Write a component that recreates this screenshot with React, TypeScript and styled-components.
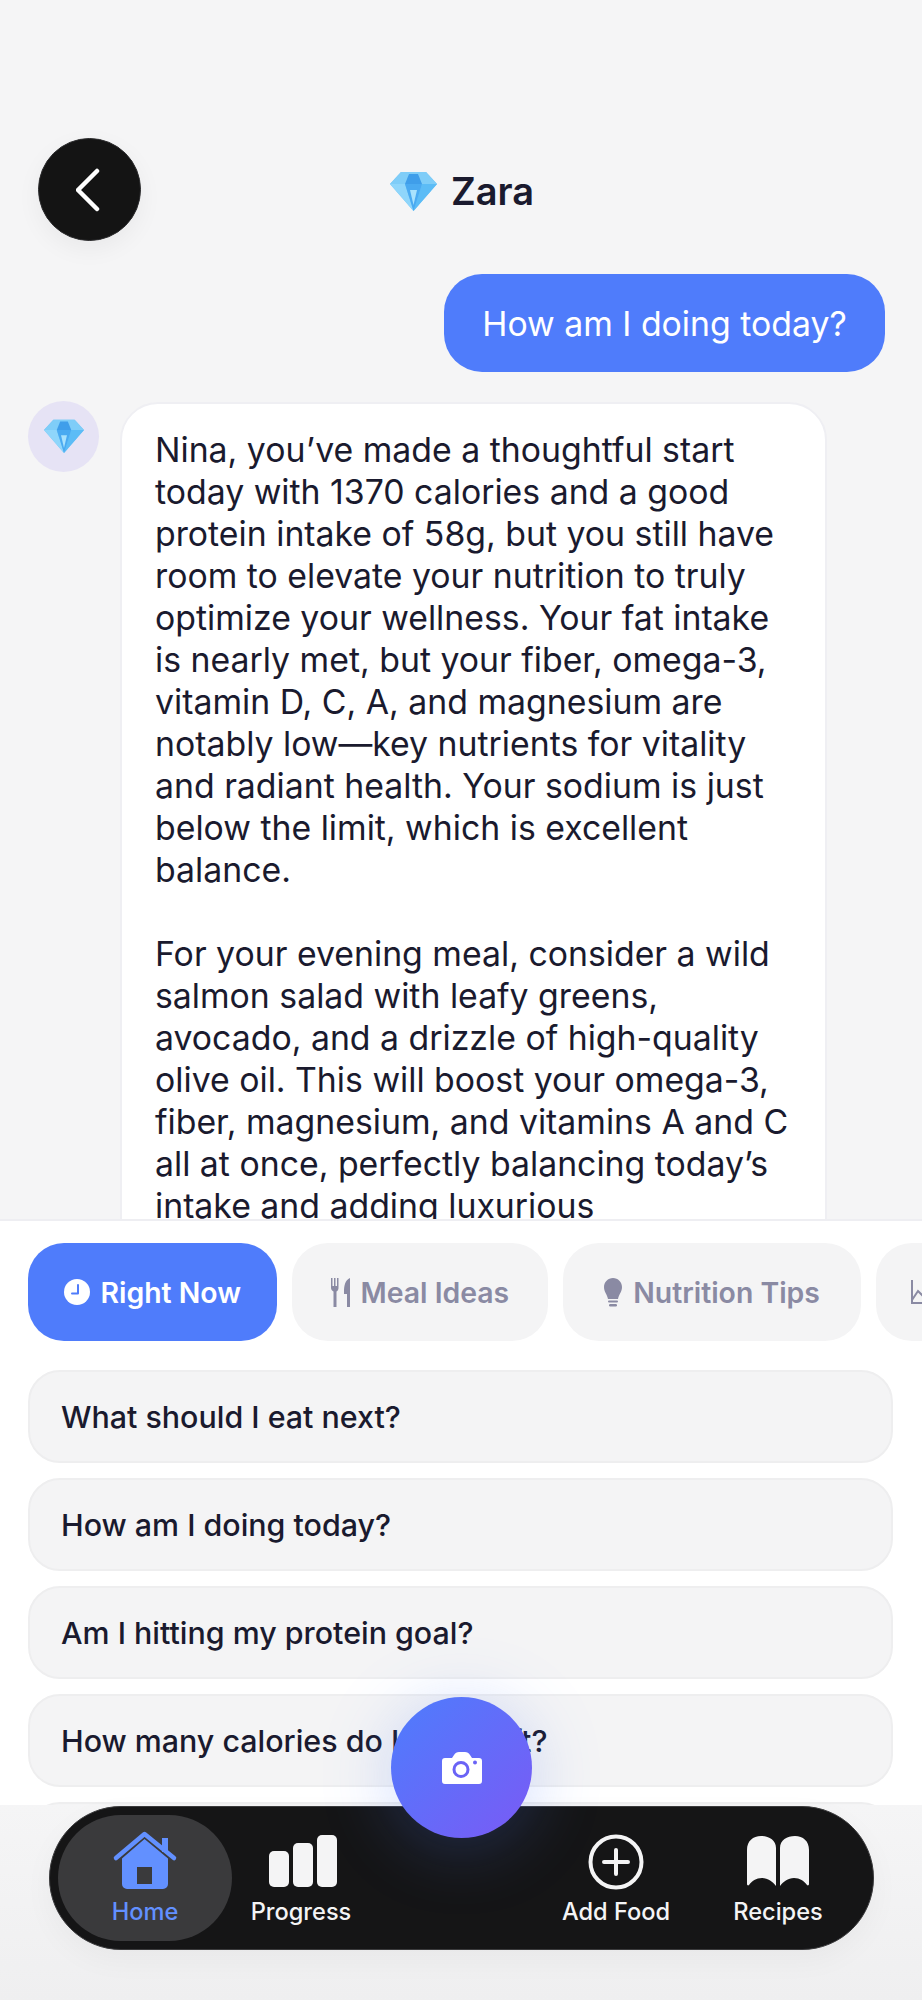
import React from "react";
import styled, { createGlobalStyle } from "styled-components";

const GlobalStyle = createGlobalStyle`
  html, body {
    margin: 0;
    padding: 0;
    background: #f5f5f6;
    font-family: "Inter", "Liberation Sans", sans-serif;
    overflow: hidden;
  }
  * { box-sizing: border-box; }
`;

const Page = styled.div`
  width: 922px;
  height: 2000px;
  display: flex;
  flex-direction: column;
  overflow: hidden;
`;

const ChatArea = styled.div`
  height: 1219px;
  padding: 138px 37px 0 28px;
  overflow: hidden;
`;

const Header = styled.header`
  height: 103px;
  display: flex;
  align-items: center;
  margin-left: 10px;
`;

const BackButton = styled.button`
  width: 103px;
  height: 103px;
  padding: 0;
  border: 1px solid #2a2a2c;
  border-radius: 50%;
  background: #141414;
  display: flex;
  align-items: center;
  justify-content: center;
  box-shadow: 0 8px 24px rgba(0, 0, 0, 0.05);
`;

const Title = styled.div`
  display: flex;
  align-items: center;
  gap: 14px;
  margin-left: 249px;
  padding-top: 2px;
  font-size: 38px;
  font-weight: 600;
  color: #1a1a2e;
`;

const UserRow = styled.div`
  display: flex;
  justify-content: flex-end;
  margin-top: 33px;
`;

const UserBubble = styled.div`
  width: 441px;
  height: 98px;
  border-radius: 38px;
  background: #4f7cfb;
  color: #fff;
  font-size: 33.800px;
  display: flex;
  align-items: center;
  justify-content: center;
`;

const BotRow = styled.div`
  display: flex;
  align-items: flex-start;
  gap: 21px;
  margin-top: 29px;
`;

const Avatar = styled.div`
  width: 71px;
  height: 71px;
  flex: none;
  border-radius: 50%;
  background: #e6e3f5;
  display: flex;
  align-items: center;
  justify-content: center;
`;

const BotBubble = styled.div`
  width: 707px;
  margin-top: 1px;
  padding: 25px 33px;
  border: 2px solid #efeff3;
  border-radius: 38px;
  background: #fff;
  color: #1a1a2e;
  font-size: 33.800px;
  line-height: 42px;
`;

const Paragraph = styled.p`
  margin: 0 0 42px;
`;

const Panel = styled.section`
  height: 586px;
  padding: 22px 0 0 28px;
  border-top: 2px solid #eeeef2;
  background: #fff;
  overflow: hidden;
`;

const Tabs = styled.div`
  display: flex;
  gap: 15px;
  width: 894px;
  overflow: hidden;
`;

const Tab = styled.div<{ $active?: boolean; $pad: number }>`
  flex: none;
  height: 98px;
  padding: 0 ${(p) => p.$pad}px;
  border-radius: 36px;
  background: ${(p) => (p.$active ? "#4f7cfb" : "#f4f4f5")};
  color: ${(p) => (p.$active ? "#fff" : "#8a8aa3")};
  font-size: 28.400px;
  font-weight: 600;
  display: flex;
  align-items: center;
  gap: 11px;
`;

const Questions = styled.div`
  display: flex;
  flex-direction: column;
  gap: 15px;
  margin-top: 29px;
`;

const Question = styled.div`
  flex: none;
  width: 865px;
  height: 93px;
  padding: 0 31px;
  border: 2px solid #eeeeef;
  border-radius: 32px;
  background: #f4f4f5;
  color: #1a1a2e;
  font-size: 30.400px;
  font-weight: 500;
  display: flex;
  align-items: center;
`;

const NavArea = styled.div`
  position: relative;
  flex: 1;
  padding: 1px 48px 0 49px;
  background: linear-gradient(#f5f5f6, #efeff0);
`;

const NavBar = styled.nav`
  height: 144px;
  padding: 8px 14px 8px 8px;
  border: 1px solid #3a3a3c;
  border-radius: 72px;
  background: #151516;
  display: flex;
  box-shadow: 0 10px 30px rgba(0, 0, 0, 0.04);
`;

const NavItem = styled.div<{ $active?: boolean; $width: number }>`
  width: ${(p) => p.$width}px;
  border-radius: 63px;
  background: ${(p) => (p.$active ? "#3a3a3c" : "transparent")};
  color: ${(p) => (p.$active ? "#6290ff" : "#f4f4f5")};
  font-size: 23.600px;
  font-weight: 500;
  display: flex;
  flex-direction: column;
  align-items: center;
  padding-top: 15px;
`;

const NavIcon = styled.div`
  height: 62px;
  display: flex;
  align-items: center;
  justify-content: center;
`;

const NavLabel = styled.span`
  margin-top: 5px;
  white-space: nowrap;
`;

const NavGap = styled.div`
  flex: 1;
`;

const CameraButton = styled.button`
  position: absolute;
  left: 391px;
  top: -108px;
  width: 141px;
  height: 141px;
  padding: 0;
  border: none;
  border-radius: 50%;
  background: linear-gradient(135deg, #4d7dfd, #7a5af5);
  box-shadow: 0 8px 70px rgba(79, 124, 251, 0.26);
  display: flex;
  align-items: center;
  justify-content: center;
`;

function Diamond({ size }: { size: number }) {
  return (
    <svg width={size} height={(size * 40) / 47} viewBox="0 0 47 40">
      <path d="M11 1h25l11 12-23.500 27L0 13z" fill="#6cc4f7" />
      <path d="M11 1h25l11 12H0z" fill="#7fcdf8" />
      <path d="M15 13l4-10h9l4 10z" fill="#3f9eea" />
      <path d="M0 13h15l8.500 27z" fill="#8fd6fb" />
      <path d="M47 13H32l-8.500 27z" fill="#5cbcf6" />
      <path d="M15 13h17l-8.500 27z" fill="#4aaaf1" />
      <path d="M20 19h7l-3.500 15z" fill="#a9e2fd" />
    </svg>
  );
}

function HomeIcon() {
  return (
    <svg width="66" height="60" viewBox="0 0 66 60">
      <path
        d="M32.500 8L10 27.500V53a5 5 0 0 0 5 5h36a5 5 0 0 0 5-5V27.500zM25 36h15v17H25z"
        fill="#6290ff"
        fillRule="evenodd"
      />
      <path d="M50 7h6v14h-6z" fill="#6290ff" />
      <path d="M4 27L32.500 3 62 27" fill="none" stroke="#6290ff" strokeWidth="4.500" strokeLinecap="round" strokeLinejoin="round" />
    </svg>
  );
}

function ProgressIcon() {
  return (
    <svg width="72" height="52" viewBox="-4 0 72 52" fill="#f4f4f5">
      <rect x="0" y="16" width="20" height="36" rx="5" />
      <rect x="24" y="8" width="20" height="44" rx="5" />
      <rect x="48" y="0" width="20" height="52" rx="5" />
    </svg>
  );
}

function AddIcon() {
  return (
    <svg width="56" height="58" viewBox="0 -2 56 58" fill="none" stroke="#f4f4f5" strokeLinecap="round">
      <circle cx="28" cy="28" r="25.500" strokeWidth="4" />
      <path d="M28 16v24M16 28h24" strokeWidth="4" />
    </svg>
  );
}

function BookIcon() {
  return (
    <svg width="62" height="50" viewBox="0 0 62 50" fill="#f4f4f5">
      <path d="M0 14C0 5 6 0 14 0c8 0 15 4 15 12v38c-3-4-8-8-14-8-6 0-10 3-13 7-1 1-2 0-2-1z" />
      <path d="M62 14C62 5 56 0 48 0c-8 0-15 4-15 12v38c3-4 8-8 14-8 6 0 10 3 13 7 1 1 2 0 2-1z" />
    </svg>
  );
}

function CameraIcon() {
  return (
    <svg width="40" height="32" viewBox="0 0 40 32">
      <path
        d="M3 6h7l2-3c1-2 3-3 5-3h6c2 0 4 1 5 3l2 3h7c2 0 3 1 3 3v20c0 2-1 3-3 3H3c-2 0-3-1-3-3V9c0-2 1-3 3-3z"
        fill="#fff"
      />
      <circle cx="19" cy="17.500" r="7" fill="#fff" stroke="#6a63f6" strokeWidth="3" />
      <circle cx="33" cy="10.500" r="2" fill="#6a63f6" />
    </svg>
  );
}

function ClockIcon() {
  return (
    <svg width="26" height="26" viewBox="0 0 26 26">
      <circle cx="13" cy="13" r="13" fill="#fff" />
      <path d="M14 6v8.500H8" fill="none" stroke="#4f7cfb" strokeWidth="2" strokeLinecap="round" strokeLinejoin="round" />
    </svg>
  );
}

function ForkIcon() {
  return (
    <svg width="19" height="29" viewBox="0 0 19 29" fill="#8a8aa3">
      <path d="M0 0h1.500v8h1.500V0h1.500v8H6V0h1.500v10c0 2-1 3-2 3.500V29H2.500V13.500c-1-.5-2.500-1.500-2.500-3.500z" />
      <path d="M13 14c0-6 1-12 6-14v29h-3V16h-3z" />
    </svg>
  );
}

function BulbIcon() {
  return (
    <svg width="18" height="29" viewBox="0 0 18 29" fill="#8a8aa3">
      <path d="M9 0c5 0 9 4 9 9 0 5-3 7-4 12H4C3 16 0 14 0 9c0-5 4-9 9-9z" />
      <rect x="4" y="22.500" width="10" height="2" rx="1" />
      <rect x="5" y="26" width="8" height="2.500" rx="1.250" />
    </svg>
  );
}

function ChartIcon() {
  return (
    <svg width="26" height="24" viewBox="0 0 26 24" fill="none" stroke="#8a8aa3" strokeWidth="2">
      <path d="M1 0v23h25" />
      <path d="M1 20l6-9 5 5 7-8 7 7" />
    </svg>
  );
}

const questions = [
  "What should I eat next?",
  "How am I doing today?",
  "Am I hitting my protein goal?",
  "How many calories do I have left?",
  "",
];

export default function App() {
  return (
    <>
      <GlobalStyle />
      <Page>
        <ChatArea>
          <Header>
            <BackButton aria-label="Back">
              <svg width="28" height="44" viewBox="0 0 28 44" fill="none" stroke="#fff" strokeWidth="4.500" strokeLinecap="round" strokeLinejoin="round">
                <path d="M21 3L2 22l19 19" />
              </svg>
            </BackButton>
            <Title>
              <Diamond size={47} />
              Zara
            </Title>
          </Header>
          <UserRow>
            <UserBubble>How am I doing today?</UserBubble>
          </UserRow>
          <BotRow>
            <Avatar>
              <Diamond size={40} />
            </Avatar>
            <BotBubble>
              <Paragraph>
                Nina, you’ve made a thoughtful start today with 1370 calories and a good protein intake of 58g, but you
                still have room to elevate your nutrition to truly optimize your wellness. Your fat intake is nearly
                met, but your fiber, omega-3, vitamin D, C, A, and magnesium are notably low—key nutrients for vitality
                and radiant health. Your sodium is just below the limit, which is excellent balance.
              </Paragraph>
              <Paragraph>
                For your evening meal, consider a wild salmon salad with leafy greens, avocado, and a drizzle of
                high-quality olive oil. This will boost your omega-3, fiber, magnesium, and vitamins A and C all at
                once, perfectly balancing today’s intake and adding luxurious
              </Paragraph>
            </BotBubble>
          </BotRow>
        </ChatArea>
        <Panel>
          <Tabs>
            <Tab $active $pad={35.5}>
              <ClockIcon />
              Right Now
            </Tab>
            <Tab $pad={39}>
              <ForkIcon />
              Meal Ideas
            </Tab>
            <Tab $pad={41}>
              <BulbIcon />
              Nutrition Tips
            </Tab>
            <Tab $pad={35}>
              <ChartIcon />
            </Tab>
          </Tabs>
          <Questions>
            {questions.map((q, i) => (
              <Question key={i}>{q}</Question>
            ))}
          </Questions>
        </Panel>
        <NavArea>
          <CameraButton aria-label="Scan food">
            <CameraIcon />
          </CameraButton>
          <NavBar>
            <NavItem $active $width={174}>
              <NavIcon>
                <HomeIcon />
              </NavIcon>
              <NavLabel>Home</NavLabel>
            </NavItem>
            <NavItem $width={138}>
              <NavIcon>
                <ProgressIcon />
              </NavIcon>
              <NavLabel>Progress</NavLabel>
            </NavItem>
            <NavGap />
            <NavItem $width={162}>
              <NavIcon>
                <AddIcon />
              </NavIcon>
              <NavLabel>Add Food</NavLabel>
            </NavItem>
            <NavItem $width={162}>
              <NavIcon>
                <BookIcon />
              </NavIcon>
              <NavLabel>Recipes</NavLabel>
            </NavItem>
          </NavBar>
        </NavArea>
      </Page>
    </>
  );
}
